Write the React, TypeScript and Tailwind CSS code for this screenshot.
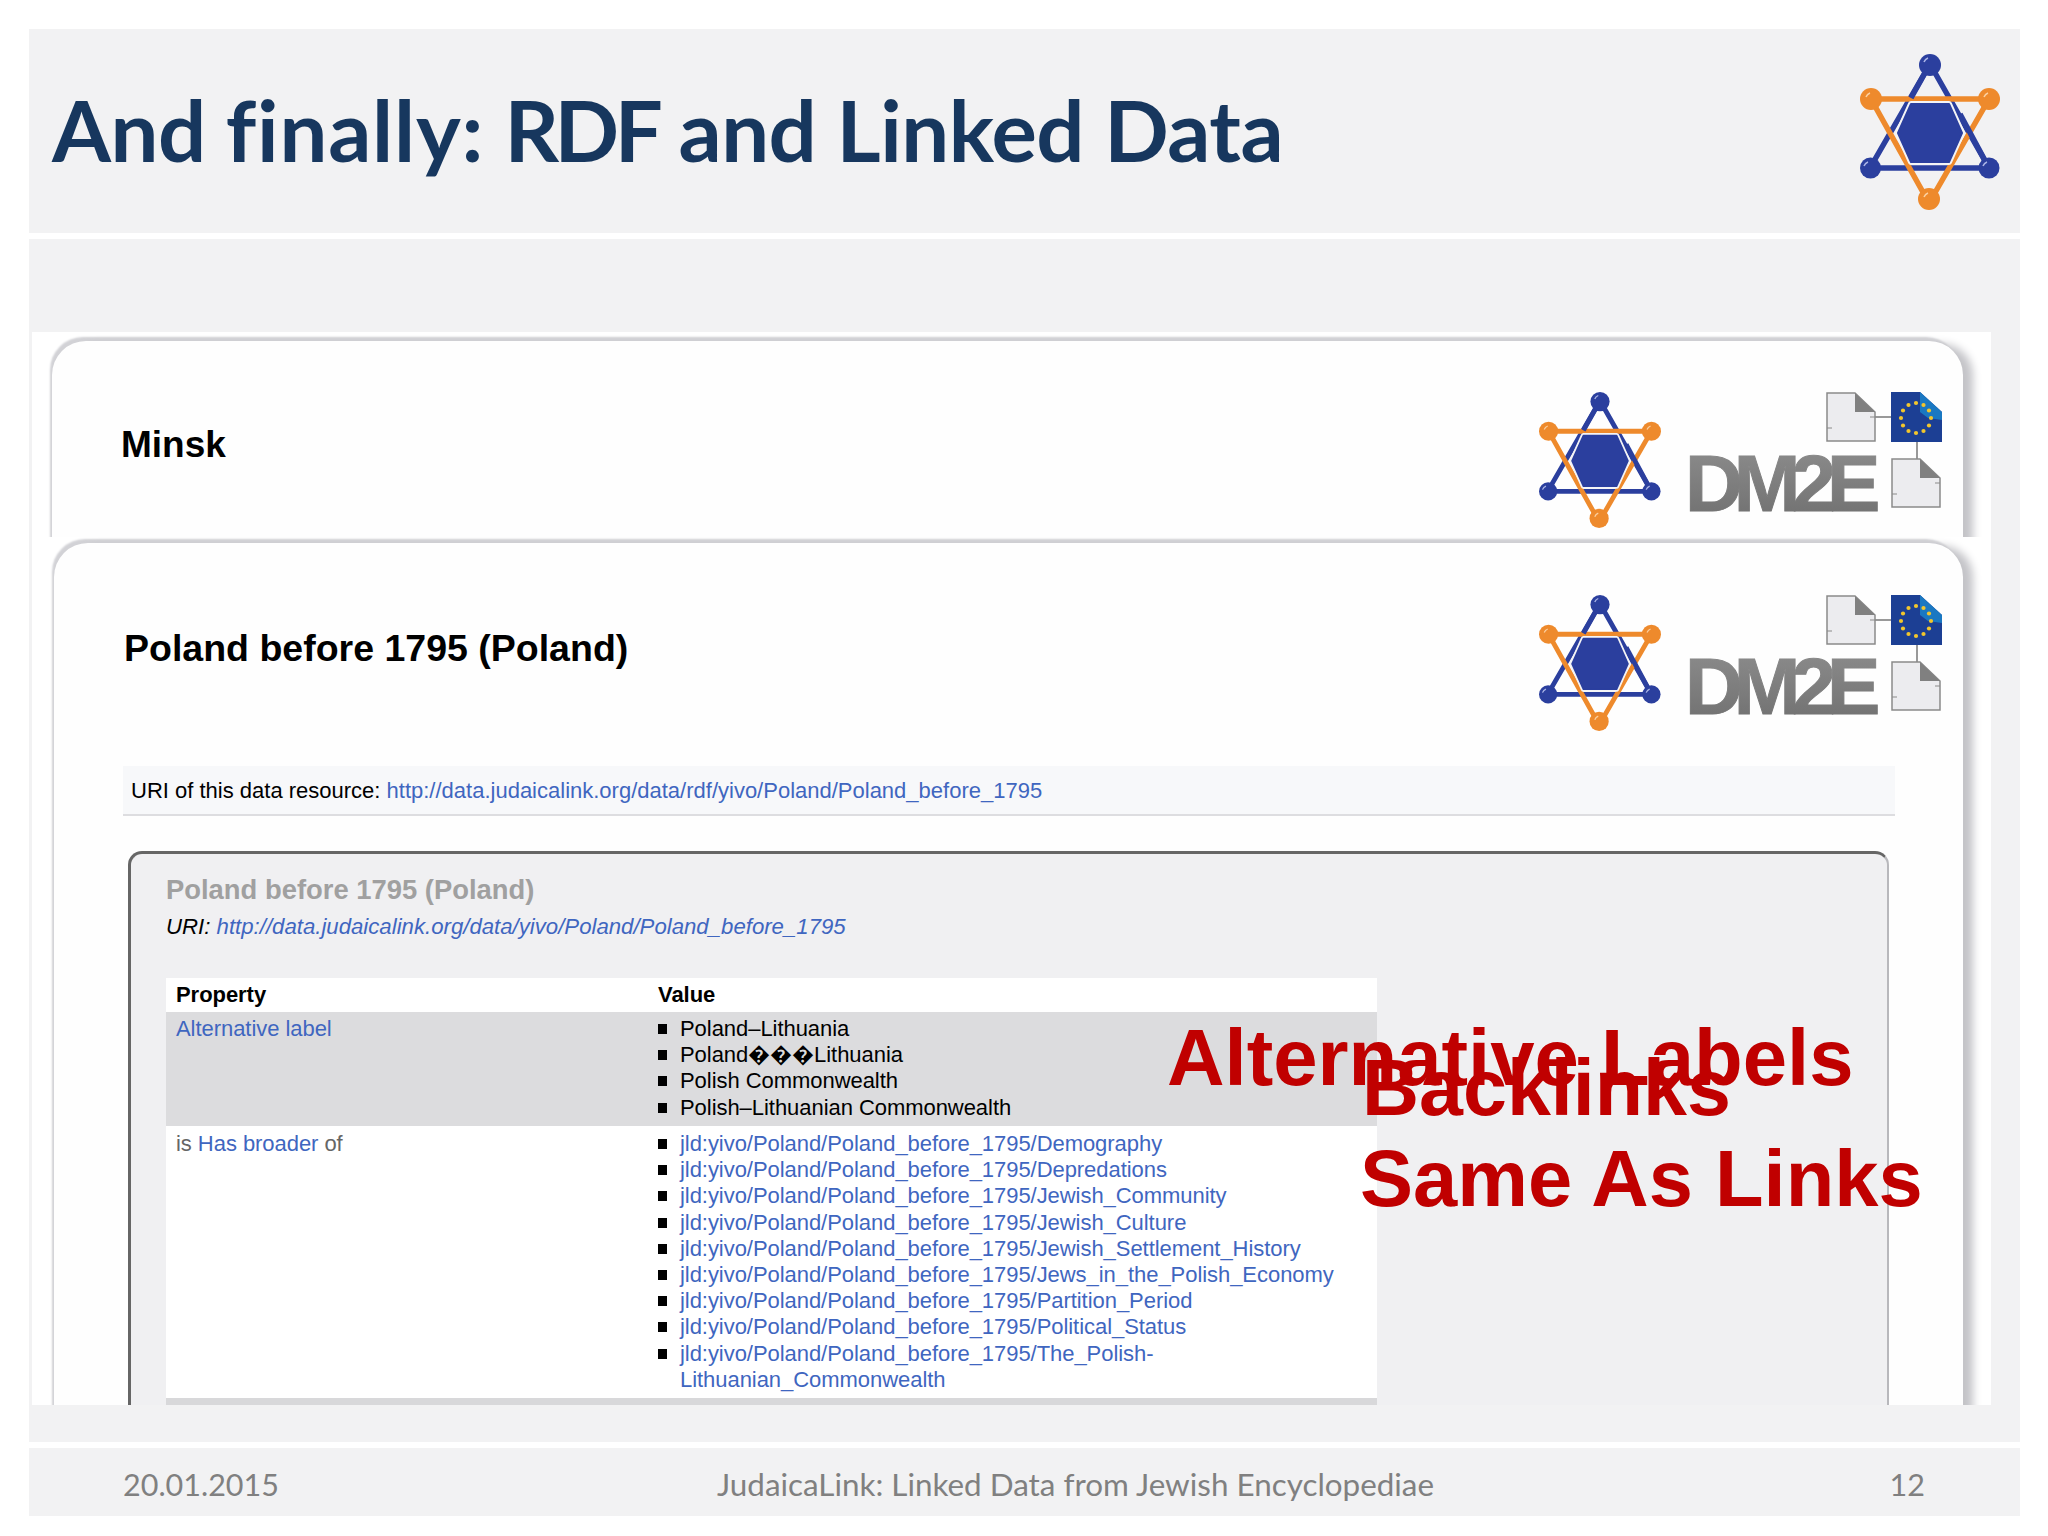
import React from "react";

const arial = { fontFamily: '"Liberation Sans", Arial, sans-serif' };

const altLabels = [
  "Poland–Lithuania",
  "Poland\uFFFD\uFFFD\uFFFDLithuania",
  "Polish Commonwealth",
  "Polish–Lithuanian Commonwealth",
];

const broaderLinks = [
  "Demography",
  "Depredations",
  "Jewish_Community",
  "Jewish_Culture",
  "Jewish_Settlement_History",
  "Jews_in_the_Polish_Economy",
  "Partition_Period",
  "Political_Status",
];

const JudaicaLogo = ({ className }: { className: string }) => (
  <svg viewBox="0 0 140 156" className={className}>
    <polygon points="70,10 129,114 10,114" fill="none" stroke="#2b3f9e" strokeWidth="5.5" />
    <polygon points="11,45 129,45 69,149" fill="none" stroke="#ee8a2c" strokeWidth="5.5" />
    <line x1="70" y1="10" x2="51" y2="44" stroke="#2b3f9e" strokeWidth="5.5" />
    <line x1="100" y1="60" x2="129" y2="114" stroke="#2b3f9e" strokeWidth="5.5" />
    <polygon points="51,50 89,50 102,79 89,108 51,108 38,79" fill="#f4f4f6" stroke="#f4f4f6" strokeWidth="6" strokeLinejoin="round" />
    <polygon
      points="51,50 89,50 102,79 89,108 51,108 38,79"
      fill="#2b3f9e"
      stroke="#2b3f9e"
      strokeWidth="2"
      strokeLinejoin="round"
    />
    <circle cx="70" cy="11" r="11" fill="#2b3f9e" />
    <circle cx="10.5" cy="114" r="10.5" fill="#2b3f9e" />
    <circle cx="129" cy="114" r="10.5" fill="#2b3f9e" />
    <circle cx="11" cy="45" r="11" fill="#ee8a2c" />
    <circle cx="129" cy="45" r="11" fill="#ee8a2c" />
    <circle cx="69" cy="145" r="11" fill="#ee8a2c" />
    <path d="M64 8a7 7 0 0 1 4-4M4 112a7 7 0 0 1 4-4M123 112a7 7 0 0 1 4-4" stroke="#aab4e6" strokeWidth="1.5" fill="none" />
    <path d="M6 43a7 7 0 0 1 4-4M124 43a7 7 0 0 1 4-4M64 143a7 7 0 0 1 4-4" stroke="#fbd0a0" strokeWidth="1.5" fill="none" />
  </svg>
);

const Doc = ({ x, y }: { x: number; y: number }) => (
  <g transform={`translate(${x} ${y})`}>
    <path d="M1 1H29L49 20V49H1Z" fill="#ececef" stroke="#8a8a8a" strokeWidth="1.5" />
    <path d="M29 1L49 20H29Z" fill="#808080" />
    <path d="M1 36h5M49 25h-5" stroke="#8a8a8a" strokeWidth="1.2" />
  </g>
);

const stars = Array.from({ length: 12 }, (_, i) => {
  const a = (i * Math.PI) / 6;
  return { cx: 228 + 15 * Math.cos(a), cy: 26 + 15 * Math.sin(a) };
});

const Dm2eLogo = () => (
  <svg viewBox="0 0 254 122" className="w-[254px] h-[122px] overflow-visible">
    <defs>
      <linearGradient id="dm2e-grad" x1="0" y1="0" x2="0" y2="1">
        <stop offset="0" stopColor="#8e8e8e" />
        <stop offset="1" stopColor="#6e6e6e" />
      </linearGradient>
    </defs>
    <line x1="187" y1="25" x2="203" y2="25" stroke="#777" strokeWidth="1.5" />
    <line x1="229" y1="50" x2="229" y2="67" stroke="#777" strokeWidth="1.5" />
    <Doc x={138} y={0} />
    <Doc x={203} y={66} />
    <path d="M203 0H232L254 20V50H203Z" fill="#1c3f94" />
    <path d="M232 0L254 20V28L240 26L232 20Z" fill="#1a78c2" />
    {stars.map((s, i) => (
      <circle key={i} cx={s.cx} cy={s.cy} r="2.1" fill="#f2c62c" />
    ))}
    <text
      x="-3"
      y="119"
      fontFamily='"Liberation Sans", Arial, sans-serif'
      fontWeight="700"
      fontSize="80"
      letterSpacing="-9"
      stroke="url(#dm2e-grad)"
      strokeWidth="1"
      fill="url(#dm2e-grad)"
    >
      DM2E
    </text>
  </svg>
);

const LogoRow = () => (
  <div className="ml-auto flex items-start gap-[27px] pr-[21px]">
    <JudaicaLogo className="w-[122px] h-[136px]" />
    <Dm2eLogo />
  </div>
);

const Bullet = () => <span className="w-[9px] h-[10px] bg-black shrink-0 mt-[8px]" />;

const cardShadow =
  "shadow-[13px_0_8px_-3px_#c4c4c8,-3px_-5px_2px_-1px_#d2d2d6] rounded-t-[34px] bg-[#fefefe]";

export default function App() {
  return (
    <div
      className="relative w-[2048px] h-[1536px] bg-white pt-[29px] pl-[29px] overflow-hidden"
      style={{ fontFamily: 'Lato, "Open Sans", sans-serif' }}
    >
      <header className="w-[1991px] h-[204px] bg-[#f2f2f3] flex items-center justify-between pl-[23px] pr-[20px]">
        <h1 className="text-[85px] leading-none font-bold text-[#17375e] tracking-[-0.5px] whitespace-nowrap pb-[4px]">
          And <span className="tracking-[0.8px]">finally:</span> <span className="tracking-[-4.5px]">RDF</span> and Linked Data
        </h1>
        <JudaicaLogo className="w-[140px] h-[156px] mt-[2px]" />
      </header>

      <main className="mt-[6px] w-[1991px] h-[1203px] bg-[#f2f2f3] pt-[93px] pl-[3px]">
        <div className="w-[1959px] h-[1073px] bg-white overflow-hidden" style={arial}>
          <div className="h-[205px] pt-[9px] pl-[20px] overflow-hidden">
            <section className={`w-[1911px] h-[300px] flex items-start pt-[51px] pl-[69px] ${cardShadow}`}>
              <div className="text-[37px] leading-[42px] font-bold text-black mt-[32px]">Minsk</div>
              <LogoRow />
            </section>
          </div>

          <div className="h-[868px] pt-[6px] pl-[22px] overflow-hidden">
            <section className={`w-[1909px] h-[900px] pt-[52px] ${cardShadow}`}>
              <div className="flex items-start pl-[70px]">
                <div className="text-[37.5px] leading-[42px] font-bold text-black mt-[32px]">
                  Poland before 1795 (Poland)
                </div>
                <LogoRow />
              </div>

              <div className="mt-[35px] ml-[69px] w-[1772px] h-[50px] bg-[#f7f8fa] border-b-2 border-[#dddde0] pl-[8px] flex items-center text-[22px] text-black whitespace-nowrap">
                URI of this data resource:&nbsp;
                <span className="text-[#3f66c0]">http://data.judaicalink.org/data/rdf/yivo/Poland/Poland_before_1795</span>
              </div>

              <div className="mt-[35px] ml-[74px] w-[1761px] h-[600px] bg-[#f0f0f2] border-t-[3px] border-l-[3px] border-r-2 border-t-[#666666] border-l-[#666666] border-r-[#b8b8bc] rounded-t-[14px] pl-[35px] pt-[20px]">
                <h2 className="text-[27.4px] leading-[32px] font-bold text-[#a0a0a0]">Poland before 1795 (Poland)</h2>
                <p className="mt-[6px] text-[22.2px] leading-[30px] italic text-black">
                  URI: <span className="text-[#3f66c0]">http://data.judaicalink.org/data/yivo/Poland/Poland_before_1795</span>
                </p>

                <div className="mt-[36px] w-[1211px] text-[22px] leading-[26.2px] tracking-[-0.05px] border-b-[7px] border-[#d8d8da]">
                  <div className="h-[34px] bg-white flex items-center font-bold text-black">
                    <div className="w-[492px] pl-[10px]">Property</div>
                    <div>Value</div>
                  </div>

                  <div className="h-[114px] bg-[#dcdcde] flex pt-[4px]">
                    <div className="w-[492px] pl-[10px] text-[#3f66c0]">Alternative label</div>
                    <ul>
                      {altLabels.map((label) => (
                        <li key={label} className="flex gap-[13px] text-black whitespace-nowrap">
                          <Bullet />
                          {label}
                        </li>
                      ))}
                    </ul>
                  </div>

                  <div className="h-[272px] bg-white flex pt-[5px]">
                    <div className="w-[492px] pl-[10px] text-[#666666]">
                      is <span className="text-[#3f66c0]">Has broader</span> of
                    </div>
                    <ul className="text-[#3f66c0]">
                      {broaderLinks.map((link) => (
                        <li key={link} className="flex gap-[13px] whitespace-nowrap">
                          <Bullet />
                          {`jld:yivo/Poland/Poland_before_1795/${link}`}
                        </li>
                      ))}
                      <li className="flex gap-[13px] whitespace-nowrap">
                        <Bullet />
                        <span>
                          jld:yivo/Poland/Poland_before_1795/The_Polish-
                          <br />
                          Lithuanian_Commonwealth
                        </span>
                      </li>
                    </ul>
                  </div>
                </div>
              </div>
            </section>
          </div>
        </div>
      </main>

      <footer className="mt-[6px] w-[1991px] h-[68px] bg-[#f2f2f3] grid grid-cols-[594px_auto_1fr] items-center pl-[94px] pr-[95px] pt-[6px] text-[30.5px] text-[#808080]">
        <span>20.01.2015</span>
        <span className="text-[31.4px]">JudaicaLink: Linked Data from Jewish Encyclopediae</span>
        <span className="text-right">12</span>
      </footer>

      <div className="absolute left-[1167px] top-[1018px] text-[79.7px] leading-[80px] font-bold text-[#c00000] whitespace-nowrap" style={arial}>
        Alternative Labels
      </div>
      <div className="absolute left-[1362px] top-[1048px] text-[79px] leading-[80px] font-bold text-[#c00000] whitespace-nowrap" style={arial}>
        Backlinks
      </div>
      <div className="absolute left-[1360px] top-[1139px] text-[79.5px] leading-[80px] font-bold text-[#c00000] whitespace-nowrap" style={arial}>
        Same As Links
      </div>
    </div>
  );
}
